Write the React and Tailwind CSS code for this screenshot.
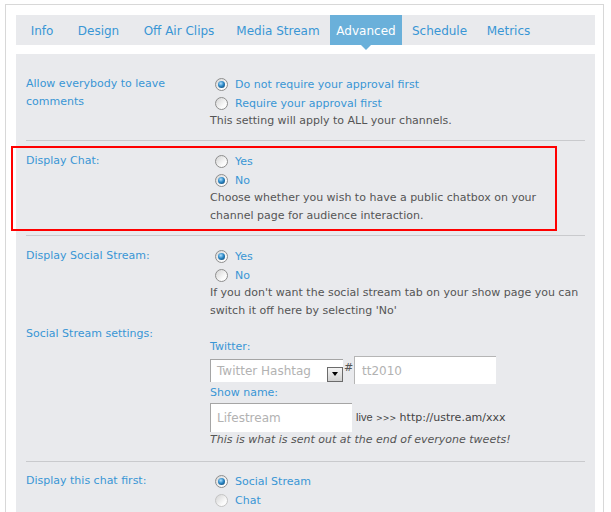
import React from "react";

const TABS = [
  { name: "Info", w: "w-[46px]" },
  { name: "Design", w: "w-[67px]" },
  { name: "Off Air Clips", w: "w-[94px]" },
  { name: "Media Stream", w: "w-[104px]" },
  { name: "Advanced", w: "w-[72px]", active: true },
  { name: "Schedule", w: "w-[75px]" },
  { name: "Metrics", w: "w-[63px]" },
];

function Radio({ checked, faded }) {
  return (
    <span
      className={
        "w-[13px] h-[13px] rounded-full border flex items-center justify-center shrink-0 bg-[linear-gradient(135deg,#d4d4d4,#fbfbfb_70%)] " +
        (faded ? "border-[#c4c4c4]" : "border-[#8e8e8e]")
      }
    >
      {checked && (
        <span className="w-[7px] h-[7px] rounded-full bg-[radial-gradient(circle_at_40%_35%,#b4e2ff_0%,#2c88c6_45%,#0a3a62_100%)]" />
      )}
    </span>
  );
}

function Option({ label, checked, faded }) {
  return (
    <div className="flex items-center h-[19px] pl-[5px] pt-[1px]">
      <Radio checked={checked} faded={faded} />
      <span className="ml-[7px] text-[#3996d5] translate-y-[1px]">{label}</span>
    </div>
  );
}

function Label({ children }) {
  return <div className="leading-[18px] text-[#3996d5] pr-4 translate-y-[1px]">{children}</div>;
}

function Desc({ children }) {
  return <div className="leading-[18px] text-[#555]">{children}</div>;
}

export default function App() {
  return (
    <div className="relative min-h-screen bg-white font-['DejaVu_Sans',sans-serif] text-[11px]">
      <div className="ml-[5px] pt-[4px]">
        <div className="w-[599px] border-l border-t border-r border-[#d8d8d8] pl-[10px] pt-[10px] pb-[40px]">
          {/* tabs */}
          <div className="w-[579px] h-[30px] bg-[#e9eaed] flex pl-[3px] text-[12px]">
            {TABS.map((t) => (
              <div
                key={t.name}
                className={
                  "relative flex items-center justify-center whitespace-nowrap " +
                  t.w +
                  (t.active ? " bg-[#6ab0da] text-white" : " text-[#3996d5]")
                }
              >
                <span className="translate-y-[1px]">{t.name}</span>
                {t.active && (
                  <span className="absolute left-1/2 -translate-x-1/2 top-full w-0 h-0 border-l-[5px] border-r-[5px] border-t-[5px] border-l-transparent border-r-transparent border-t-[#6ab0da]" />
                )}
              </div>
            ))}
          </div>

          {/* panel */}
          <div className="w-[579px] mt-[9px] bg-[#e9eaed] px-[10px]">
            {/* comments */}
            <div className="grid grid-cols-[184px_1fr] pt-[20px] pb-[10px] border-b border-[#c9cacd]">
              <Label>Allow everybody to leave comments</Label>
              <div>
                <Option label="Do not require your approval first" checked />
                <Option label="Require your approval first" />
                <Desc>This setting will apply to ALL your channels.</Desc>
              </div>
            </div>

            {/* chat */}
            <div className="grid grid-cols-[184px_1fr] pt-[10px] pb-[10px] border-b border-[#c9cacd]">
              <Label>Display Chat:</Label>
              <div>
                <Option label="Yes" />
                <Option label="No" checked />
                <Desc>
                  Choose whether you wish to have a public chatbox on your
                  <br />
                  channel page for audience interaction.
                </Desc>
              </div>
            </div>

            {/* social stream */}
            <div className="pt-[10px] pb-[13px] border-b border-[#c9cacd]">
              <div className="grid grid-cols-[184px_1fr]">
                <Label>Display Social Stream:</Label>
                <div>
                  <Option label="Yes" checked />
                  <Option label="No" />
                  <Desc>
                    If you don't want the social stream tab on your show page you can
                    <br />
                    switch it off here by selecting 'No'
                  </Desc>
                </div>
              </div>
              <div className="grid grid-cols-[184px_1fr] mt-[4px]">
                <Label>Social Stream settings:</Label>
                <div className="pt-[14px]">
                  <div className="leading-[18px] text-[#3996d5]">Twitter:</div>
                  <div className="flex items-center h-[28px]">
                    <div className="w-[133px] h-[23px] bg-white border-l border-t border-[#a5a5a5] flex items-end justify-between">
                      <span className="self-center pl-[6px] text-[12px] text-[#b2b2b2]">Twitter Hashtag</span>
                      <span className="w-[16px] h-[15px] border border-[#6b6b6b] bg-[linear-gradient(#f4f4f4,#d2d2d2)] flex items-center justify-center">
                        <span className="w-0 h-0 border-l-[3px] border-r-[3px] border-t-[4px] border-l-transparent border-r-transparent border-t-black" />
                      </span>
                    </div>
                    <span className="w-[11px] pl-[1px] -mt-[4px] text-[#555]">#</span>
                    <div className="w-[142px] h-[28px] bg-white border-l border-t border-[#b5b5b5] flex items-center pl-[7px] text-[12px] text-[#b2b2b2]">
                      tt2010
                    </div>
                  </div>
                  <div className="leading-[18px] text-[#3996d5]">Show name:</div>
                  <div className="flex items-center mt-[1px] h-[29px]">
                    <div className="w-[142px] h-[29px] bg-white border-l border-t border-[#a5a5a5] flex items-center pl-[6px] text-[12px] text-[#b2b2b2]">
                      Lifestream
                    </div>
                    <span className="ml-[4px] text-[#444] whitespace-nowrap">
                      <span className="font-['Liberation_Sans',sans-serif] text-[11px]">live</span>{" "}
                      <span className="text-[8px]">&gt;&gt;&gt;</span> http://ustre.am/xxx
                    </span>
                  </div>
                  <div className="leading-[16px] italic text-[#555]">
                    This is what is sent out at the end of everyone tweets!
                  </div>
                </div>
              </div>
            </div>

            {/* chat first */}
            <div className="grid grid-cols-[184px_1fr] pt-[9px] pb-[10px]">
              <Label>Display this chat first:</Label>
              <div>
                <Option label="Social Stream" checked />
                <Option label="Chat" faded />
              </div>
            </div>
          </div>
        </div>
      </div>

      {/* red annotation box */}
      <div className="absolute left-[11px] top-[146px] w-[546px] h-[85px] border-2 border-[#ff0000] pointer-events-none" />
    </div>
  );
}
